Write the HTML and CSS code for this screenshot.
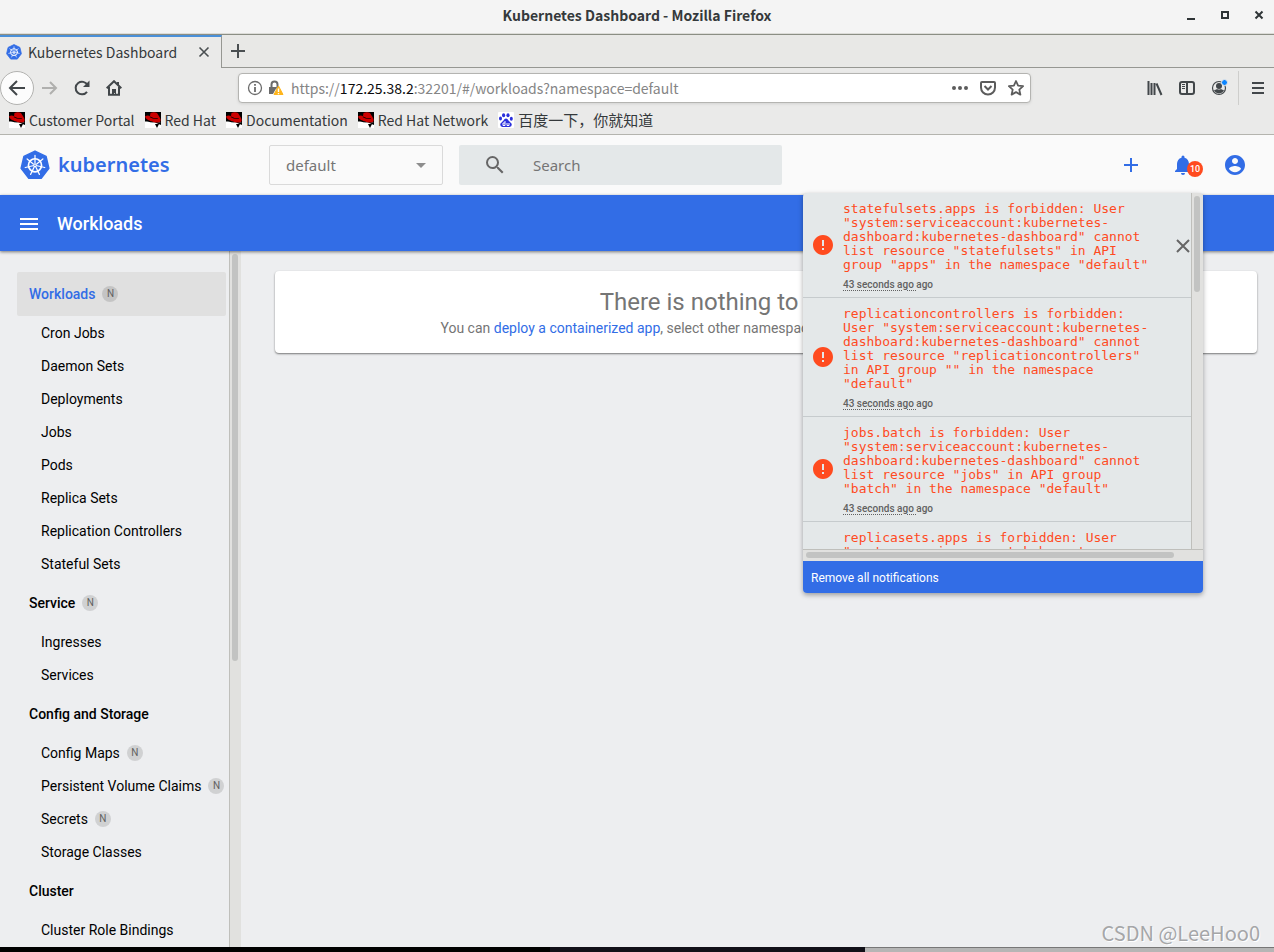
FILE: index.html
```html
<!DOCTYPE html>
<html lang="en">
<head>
<meta charset="utf-8">
<title>Kubernetes Dashboard</title>
<link rel="stylesheet" href="styles.css">
</head>
<body>
<svg class="defs" aria-hidden="true">
  <symbol id="wheel" viewBox="0 0 32 32">
    <path fill="#326de6" d="M16 1.2 27.8 6.8 30.8 19.6 22.6 30.2H9.4L1.2 19.6 4.2 6.8z" stroke="#326de6" stroke-width="1.6" stroke-linejoin="round"/>
    <g fill="none" stroke="#fff" stroke-linecap="round">
      <circle cx="16" cy="16.3" r="7" stroke-width="1.8"/>
      <path stroke-width="1.3" d="M16 14V5.6M17.8 14.9 24.4 9.6M18.2 16.8 26.4 18.7M17 18.4 20.7 26M15 18.4 11.3 26M13.8 16.8 5.6 18.7M14.2 14.9 7.6 9.6"/>
    </g>
    <circle cx="16" cy="16.3" r="2" fill="#fff"/><circle cx="16" cy="16.3" r=".8" fill="#326de6"/>
  </symbol>
  <symbol id="redhat" viewBox="0 0 16 16">
    <path fill="#000" d="M0 0h16v10H0z"/><path fill="#fff" d="M0 9.500h4l7 1 5 1V16H0z"/>
    <path fill="#c00" d="M0 4.500Q2 3 5 4L5.500 1Q9-.5 12 1L14.500 5Q16.500 8 15 10Q12 12 7 9.500Q1 8 0 4.500z"/>
    <path fill="#000" d="M4.500 5Q8 7.500 13 7L13 6.600Q8 6.500 5 4.600zM2 9Q6 11 10 10.500L16 13V10Q9 11.500 4 8.500zM10 12 12 16 14 12z"/>
  </symbol>
  <symbol id="error" viewBox="0 0 24 24"><path fill="#ff4b1f" d="M12 2C6.480 2 2 6.480 2 12s4.480 10 10 10 10-4.480 10-10S17.520 2 12 2zm1 15h-2v-2h2v2zm0-4h-2V7h2v6z"/></symbol>
</svg>

<header class="titlebar">
  <span class="window-title">Kubernetes Dashboard - Mozilla Firefox</span>
  <div class="window-buttons">
    <button aria-label="Minimize"><svg width="10" height="10"><path fill="#2e3436" d="M1 8h8v2H1z"/></svg></button>
    <button aria-label="Maximize"><svg width="10" height="10"><path d="M2 2h6v6H2z" fill="none" stroke="#2e3436" stroke-width="2"/></svg></button>
    <button aria-label="Close window"><svg width="10" height="10"><path d="m1.500 1.500 7 7m0-7-7 7" stroke="#2e3436" stroke-width="2"/></svg></button>
  </div>
</header>

<div class="tabs">
  <div class="tab">
    <svg width="16" height="16"><use href="#wheel"/></svg>
    <span class="tab-name">Kubernetes Dashboard</span>
    <button aria-label="Close tab"><svg width="12" height="12"><path d="m1.500 1.500 9 9m0-9-9 9" stroke="#4a4f51" stroke-width="1.600"/></svg></button>
  </div>
  <button class="new-tab" aria-label="New tab"><svg width="16" height="16"><path d="M8 1v14M1 8h14" stroke="#4a4f51" stroke-width="2"/></svg></button>
</div>

<nav class="toolbar" aria-label="Browser">
  <button class="back" aria-label="Back"><svg width="18" height="16"><path d="M17 8H2m7-7L2 8l7 7" fill="none" stroke="#42474a" stroke-width="2"/></svg></button>
  <button class="nav-button" aria-label="Forward"><svg width="16" height="16"><path d="M0 8h14M8 2l6 6-6 6" fill="none" stroke="#b0b0ae" stroke-width="2"/></svg></button>
  <button class="nav-button" aria-label="Reload"><svg width="16" height="16"><path d="M13.500 5A6.300 6.300 0 1 0 13 11.800" fill="none" stroke="#42474a" stroke-width="2"/><path fill="#42474a" d="M15.500.5V7H9z"/></svg></button>
  <button class="nav-button" aria-label="Home"><svg width="16" height="16"><path d="M.7 8.200 8 1.200l7.300 7M3 7v7.800h10V7M12 2v3" fill="none" stroke="#42474a" stroke-width="2"/><path fill="#42474a" d="M6 9h4v6H9v-2H8v2H6z"/></svg></button>
  <div class="address">
    <svg width="16" height="16" viewBox="0 0 16 16"><circle cx="8" cy="8" r="6.500" fill="none" stroke="#6b6b6b" stroke-width="1.300"/><path d="M8 7v5M8 4v1.800" stroke="#6b6b6b" stroke-width="1.800"/></svg>
    <svg width="16" height="16" viewBox="0 0 16 16"><path fill="#6b6b6b" d="M1 7h8l-4 7H1z"/><path d="M3.500 7V4.500a3 3 0 0 1 6 0V9" fill="none" stroke="#6b6b6b" stroke-width="2"/><path fill="#ffb51b" stroke="#ffb51b" stroke-linejoin="round" d="m10.500 6 4.500 8.500H6z"/><path d="M10.500 8.500V12m0 1v1.300" stroke="#fff" stroke-width="1.400"/></svg>
    <p class="url">https://<b>172.25.38.2</b>:32201/#/workloads?namespace=default</p>
    <button aria-label="Page actions"><svg width="16" height="16"><path fill="#5c5c5c" d="M0 8a2 2 0 1 1 4 0 2 2 0 0 1-4 0m6 0a2 2 0 1 1 4 0 2 2 0 0 1-4 0m6 0a2 2 0 1 1 4 0 2 2 0 0 1-4 0"/></svg></button>
    <button aria-label="Save to Pocket"><svg width="16" height="16" fill="none" stroke="#5c5c5c" stroke-width="2"><path d="M2 2h12q1 0 1 1v4.500a7 7 0 0 1-14 0V3q0-1 1-1z"/><path d="m4.500 6 3.500 3.500L11.500 6"/></svg></button>
    <button aria-label="Bookmark"><svg width="16" height="16"><path d="m8 1 2.100 4.700 5 .5-3.800 3.400 1.100 5L8 12.100l-4.400 2.500 1.100-5L.9 6.200l5-.5z" fill="none" stroke="#5c5c5c" stroke-width="1.800" stroke-linejoin="round"/></svg></button>
  </div>
  <div class="tools">
    <button aria-label="Library"><svg width="16" height="16"><path d="M1.500 1v14M4.500 3v12M7.500 3v12M9.500 3.500 14.500 15" stroke="#42474a" stroke-width="2"/></svg></button>
    <button aria-label="Sidebars"><svg width="16" height="16"><path d="M3 2h10q2 0 2 2v8q0 2-2 2H3q-2 0-2-2V4q0-2 2-2zM8 2v12" fill="none" stroke="#42474a" stroke-width="2"/><path d="M3 4.500h3m-3 2h3m-3 2h3" stroke="#42474a"/></svg></button>
    <button aria-label="Account"><svg width="16" height="16" overflow="visible"><circle cx="8" cy="8" r="6.500" fill="none" stroke="#42474a" stroke-width="1.200"/><circle cx="8" cy="6" r="3" fill="#42474a"/><path fill="#42474a" d="M3 10q2 0 3-1 2 1 4 0 1 1 3 1-1 3-5 3.500-4-.5-5-3.500z"/><circle cx="13.500" cy="2.500" r="3" fill="#0a84ff" stroke="#eaeae9"/></svg></button>
    <button class="menu-button" aria-label="Menu"><svg width="14" height="14"><path d="M1 2h12M1 7h12M1 12h12" stroke="#42474a" stroke-width="2"/></svg></button>
  </div>
</nav>

<nav class="bookmarks" aria-label="Bookmarks">
  <a href="#"><svg width="16" height="16"><use href="#redhat"/></svg>Customer Portal</a>
  <a href="#"><svg width="16" height="16"><use href="#redhat"/></svg>Red Hat</a>
  <a href="#"><svg width="16" height="16"><use href="#redhat"/></svg>Documentation</a>
  <a href="#"><svg width="16" height="16"><use href="#redhat"/></svg>Red Hat Network</a>
  <a class="cjk" href="#"><svg width="16" height="16" viewBox="0 0 16 16"><rect width="16" height="16" rx="1" fill="#fff"/><g fill="#2a2fdc"><ellipse cx="5.600" cy="3.200" rx="1.600" ry="2"/><ellipse cx="10" cy="3.200" rx="1.600" ry="2"/><ellipse cx="2.500" cy="6.500" rx="1.500" ry="2"/><ellipse cx="13.300" cy="6.800" rx="1.500" ry="2"/><path d="M8 6.500q1.500 0 2.500 2l3 3q1 3-2 3.500H4.500q-3-.5-2-3.500l3-3q1-2 2.500-2z"/></g><path d="M7 9v4.500H5v-2.500h2M9 11v2.500h2V11" fill="none" stroke="#fff"/></svg>百度一下，你就知道</a>
</nav>

<header class="app-header">
  <a class="brand" href="#"><svg width="30" height="32"><use href="#wheel"/></svg>kubernetes</a>
  <div class="namespace">
    <select aria-label="Namespace"><option>default</option></select>
    <svg width="10" height="5"><path fill="#8d8d8d" d="M0 0h10L5 5z"/></svg>
  </div>
  <label class="search">
    <svg width="24" height="24" viewBox="0 0 24 24"><path fill="#666" d="M15.500 14h-.79l-.28-.27A6.471 6.471 0 0 0 16 9.500 6.500 6.500 0 1 0 9.500 16c1.610 0 3.090-.59 4.230-1.570l.27.28v.79l5 4.990L20.490 19l-4.990-5zm-6 0C7.010 14 5 11.990 5 9.500S7.010 5 9.500 5 14 7.010 14 9.500 11.990 14 9.500 14z"/></svg>
    <input type="text" placeholder="Search" aria-label="Search">
  </label>
  <div class="actions">
    <button aria-label="Create"><svg width="24" height="24"><path fill="#326de6" d="M19 13h-6v6h-2v-6H5v-2h6V5h2v6h6z"/></svg></button>
    <div class="bell">
      <button aria-label="Notifications"><svg width="24" height="24"><path fill="#326de6" d="M10 20h4q0 2-2 2t-2-2zM18 16v-5c0-3.070-1.640-5.640-4.500-6.320V4a1.500 1.500 0 0 0-3 0v.68C7.630 5.360 6 7.920 6 11v5l-2 2v1h16v-1z"/></svg></button>
      <span class="count">10</span>
      <section class="notifications" aria-label="Notifications">
        <div class="scroll-row">
          <div class="notices">
            <article class="notice">
              <svg width="24" height="24"><use href="#error"/></svg>
              <div class="notice-body"><p class="message">statefulsets.apps is forbidden: User "system:serviceaccount:kubernetes-dashboard:kubernetes-dashboard" cannot list resource "statefulsets" in API group "apps" in the namespace "default"</p><p class="age"><span>43 seconds ago </span>ago</p></div>
              <button aria-label="Dismiss"><svg width="14" height="14"><path d="m1 1 12 12m0-12L1 13" stroke="#666" stroke-width="2"/></svg></button>
            </article>
            <article class="notice">
              <svg width="24" height="24"><use href="#error"/></svg>
              <div class="notice-body"><p class="message">replicationcontrollers is forbidden: User "system:serviceaccount:kubernetes-dashboard:kubernetes-dashboard" cannot list resource "replicationcontrollers" in API group "" in the namespace "default"</p><p class="age"><span>43 seconds ago </span>ago</p></div>
            </article>
            <article class="notice">
              <svg width="24" height="24"><use href="#error"/></svg>
              <div class="notice-body"><p class="message">jobs.batch is forbidden: User "system:serviceaccount:kubernetes-dashboard:kubernetes-dashboard" cannot list resource "jobs" in API group "batch" in the namespace "default"</p><p class="age"><span>43 seconds ago </span>ago</p></div>
            </article>
            <article class="notice">
              <svg width="24" height="24"><use href="#error"/></svg>
              <div class="notice-body"><p class="message">replicasets.apps is forbidden: User "system:serviceaccount:kubernetes-dashboard:kubernetes-dashboard" cannot list resource "replicasets" in API group "apps" in the namespace "default"</p><p class="age"><span>43 seconds ago </span>ago</p></div>
            </article>
          </div>
          <div class="vbar"><div class="vthumb short"></div></div>
        </div>
        <div class="hbar"><div class="hthumb"></div></div>
        <button class="remove-all">Remove all notifications</button>
      </section>
    </div>
    <button aria-label="User"><svg width="24" height="24"><path fill="#326de6" d="M12 2C6.480 2 2 6.480 2 12s4.480 10 10 10 10-4.480 10-10S17.520 2 12 2zm0 3c1.660 0 3 1.340 3 3s-1.340 3-3 3-3-1.340-3-3 1.340-3 3-3zm0 14.200c-2.500 0-4.710-1.280-6-3.220.03-1.990 4-3.080 6-3.080 1.990 0 5.970 1.090 6 3.080-1.290 1.940-3.500 3.220-6 3.220z"/></svg></button>
  </div>
</header>

<div class="page-bar">
  <button aria-label="Toggle menu"><svg width="18" height="12"><path fill="#fff" d="M0 0h18v2H0zm0 5h18v2H0zm0 5h18v2H0z"/></svg></button>
  <h1>Workloads</h1>
</div>

<div class="content">
  <nav class="side" aria-label="Resources">
    <a class="group active" href="#">Workloads<i>N</i></a>
    <a href="#">Cron Jobs</a><a href="#">Daemon Sets</a><a href="#">Deployments</a><a href="#">Jobs</a><a href="#">Pods</a><a href="#">Replica Sets</a><a href="#">Replication Controllers</a><a href="#">Stateful Sets</a>
    <a class="group" href="#">Service<i>N</i></a>
    <a href="#">Ingresses</a><a href="#">Services</a>
    <a class="group" href="#">Config and Storage</a>
    <a href="#">Config Maps<i>N</i></a><a href="#">Persistent Volume Claims<i>N</i></a><a href="#">Secrets<i>N</i></a><a href="#">Storage Classes</a>
    <a class="group" href="#">Cluster</a>
    <a href="#">Cluster Role Bindings</a>
  </nav>
  <div class="vbar"><div class="vthumb tall"></div></div>
  <main>
    <section class="card">
      <h2>There is nothing to display here</h2>
      <p>You can <a href="#">deploy a containerized app</a>, select other namespace or <a class="tour" href="#">take the Dashboard Tour</a> to learn more.</p>
    </section>
  </main>
  <span class="watermark">CSDN @LeeHoo0</span>
</div>
<footer class="desktop-edge"><div class="edge-black"></div><div class="edge-dark"></div><div class="edge-light"></div></footer>
</body>
</html>
```
FILE: styles.css
```css
* { box-sizing: border-box; }
body {
  margin: 0;
  height: 100vh;
  display: flex;
  flex-direction: column;
  overflow: hidden;
  background: #edeef0;
  color: #000;
  font: 14px/20px Roboto, sans-serif;
}
h1, h2, p { margin: 0; }
a { color: inherit; text-decoration: none; }
svg { flex: none; display: block; }
.defs { position: absolute; width: 0; height: 0; }
button {
  border: 0;
  padding: 0;
  background: none;
  font: inherit;
  display: flex;
  align-items: center;
  justify-content: center;
}

/* Browser window */
.titlebar, .tabs, .toolbar, .bookmarks {
  flex: none;
  display: flex;
  align-items: center;
  font-family: "Noto Sans CJK SC", "Noto Sans", sans-serif;
  color: #35393b;
}
.titlebar {
  height: 34px;
  padding-bottom: 3px;
  position: relative;
  justify-content: center;
  background: #f4f4f4;
  border-bottom: 1px solid #dcdcd8;
}
.window-title { font-weight: 700; }
.window-buttons { position: absolute; right: 10px; display: flex; gap: 24px; }
.tabs {
  height: 34px;
  align-items: stretch;
  background: #e8e8e6;
  border-top: 1px solid #8b8e84;
  border-bottom: 1px solid #969792;
}
.tab {
  width: 222px;
  margin-bottom: -1px;
  padding: 0 11px 2px 6px;
  display: flex;
  align-items: center;
  gap: 6px;
  background: #eaeae9;
  border-top: 2px solid #4a90d9;
  border-right: 1px solid #969792;
}
.tab-name { flex: 1; white-space: nowrap; }
.new-tab { width: 32px; }
.toolbar { height: 40px; background: #eaeae9; }
.back {
  width: 34px;
  height: 34px;
  border: 1px solid #b2b2b0;
  border-radius: 50%;
  background: #fcfcfc;
}
.nav-button { width: 32px; height: 32px; }
.address {
  flex: 0 1 793px;
  height: 30px;
  margin: 0 auto 0 108px;
  padding: 0 3px 0 8px;
  display: flex;
  align-items: center;
  gap: 5px;
  background: #fff;
  border: 1px solid #b4b4b1;
  border-radius: 4px;
  box-shadow: 0 1px 3px #0000001a;
}
.address button { width: 23px; }
.url { flex: 1; padding-left: 2px; color: #858585; white-space: nowrap; }
.url b { font-weight: 400; color: #0c0c0d; }
.tools { display: flex; align-items: center; gap: 16px; }
.tools .menu-button {
  height: 34px;
  padding: 0 9px 0 12px;
  margin-left: -5px;
  border-left: 1px solid #cececc;
}
.bookmarks {
  height: 27px;
  padding: 0 9px 3px;
  gap: 10px;
  background: #eaeae9;
  border-bottom: 1px solid #b4b4ae;
  line-height: 22px;
}
.bookmarks a { display: flex; align-items: center; gap: 4px; white-space: nowrap; }
.bookmarks .cjk { font-size: 15px; }

/* Dashboard header */
.app-header {
  flex: none;
  height: 60px;
  display: flex;
  align-items: center;
  padding: 0 27px 0 20px;
  background: #fafafa;
}
.brand {
  width: 249px;
  display: flex;
  align-items: center;
  gap: 8px;
  color: #326de6;
  font: 600 20px/28px "Noto Sans", sans-serif;
}
.namespace { position: relative; width: 174px; }
.namespace select {
  width: 100%;
  height: 40px;
  padding: 0 16px;
  appearance: none;
  border: 1px solid #dadada;
  border-radius: 2px;
  background: none;
  color: #757575;
  font: 15px "Noto Sans", sans-serif;
}
.namespace svg { position: absolute; right: 17px; top: 18px; }
.search {
  width: 323px;
  height: 40px;
  margin-left: 16px;
  padding: 0 16px 0 24px;
  display: flex;
  align-items: center;
  gap: 26px;
  border-radius: 2px;
  background: #e4e8e9;
}
.search input {
  flex: 1;
  min-width: 0;
  padding: 0;
  border: 0;
  background: none;
  font: 15px "Noto Sans", sans-serif;
}
.search input::placeholder { color: #757575; }
.actions { margin-left: auto; display: flex; align-items: center; gap: 28px; }
.bell { position: relative; z-index: 3; }
.count {
  position: absolute;
  left: 16px;
  top: 8px;
  width: 16px;
  height: 16px;
  border-radius: 50%;
  background: #ff4b1f;
  color: #fff;
  font: 500 9px/16px Roboto, sans-serif;
  text-align: center;
}

/* Notification panel */
.notifications {
  position: absolute;
  top: 40px;
  right: -8px;
  width: 400px;
  border-radius: 4px;
  overflow: hidden;
  background: #e4e8e9;
  box-shadow: 0 2px 5px #00000059;
}
.scroll-row { display: flex; height: 356px; }
.notices { flex: 1; overflow: hidden; }
.notice {
  display: flex;
  align-items: center;
  padding: 9px 0 0 8px;
  border-bottom: 1px solid #c6cbcd;
}
.notice > svg { margin: -9px 8px 0 0; }
.notice-body { width: 315px; margin-right: auto; }
.notice button { margin: -8px 1px 0 0; }
.message { color: #ff4b1f; font: 13px/14px "DejaVu Sans Mono", monospace; }
.age { color: #616161; font: 500 10px/25px Roboto, sans-serif; }
.age span { white-space: pre; text-decoration: underline dotted; text-underline-offset: 2px; }
.vbar {
  flex: none;
  width: 12px;
  padding: 3px 2px;
  border-left: 1px solid #bfbfbb;
  background: #e1e1df;
}
.vthumb { width: 6px; border-radius: 3px; background: #c2c3c2; }
.short { height: 96px; }
.tall { height: 407px; }
.hbar {
  height: 12px;
  padding: 2px 29px 2px 3px;
  border-top: 1px solid #bfbfbb;
  background: #e1e1df;
}
.hthumb { height: 6px; border-radius: 3px; background: #c2c3c2; }
.remove-all {
  width: 100%;
  height: 32px;
  padding: 2px 8px 0;
  justify-content: flex-start;
  background: #326de6;
  color: #fff;
  font-size: 12px;
}

/* Page */
.page-bar {
  flex: none;
  position: relative;
  z-index: 1;
  height: 56px;
  padding: 2px 20px 0;
  display: flex;
  align-items: center;
  gap: 19px;
  background: #326de6;
  color: #fff;
  box-shadow: 0 1px 3px #00000080;
}
h1 { font: 500 18px/24px Roboto, sans-serif; }
.content { flex: 1; min-height: 0; display: flex; position: relative; }
.side {
  flex: none;
  width: 229px;
  padding: 21px 3px 0 17px;
  display: flex;
  flex-direction: column;
  overflow: hidden;
}
.side a {
  flex: none;
  height: 33px;
  padding-left: 24px;
  display: flex;
  align-items: center;
  gap: 7px;
  white-space: nowrap;
}
.side .group {
  height: 44px;
  margin-top: 1px;
  padding-left: 12px;
  border-radius: 2px;
  font-weight: 500;
}
.side .active { margin-top: 0; background: #e0e0e0; color: #326de6; }
.side i {
  width: 16px;
  height: 16px;
  border-radius: 50%;
  background: #0000001f;
  color: #616161;
  font: 10px/16px Roboto, sans-serif;
  text-align: center;
}
main { flex: 1; padding: 20px 17px 0 34px; }
.card {
  height: 82px;
  padding: 16px;
  border-radius: 4px;
  background: #fff;
  color: #757575;
  text-align: center;
  box-shadow: 0 1px 2px #00000080;
}
.card h2 { font: 24px/31px Roboto, sans-serif; }
.card a { color: #326de6; }
.card .tour { padding-right: 14px; }
.watermark {
  position: absolute;
  right: 14px;
  bottom: 0;
  color: #a5a6a8;
  font: 20px/28px "Noto Sans CJK SC", sans-serif;
  text-shadow: 1px 1px #fff;
}
.desktop-edge { flex: none; height: 5px; display: flex; }
.edge-black { flex: 550; background: #000; }
.edge-dark { flex: 315; background: #111018; }
.edge-light { flex: 409; background: #b5b5b5; border-top: 1px solid #777; }
```
